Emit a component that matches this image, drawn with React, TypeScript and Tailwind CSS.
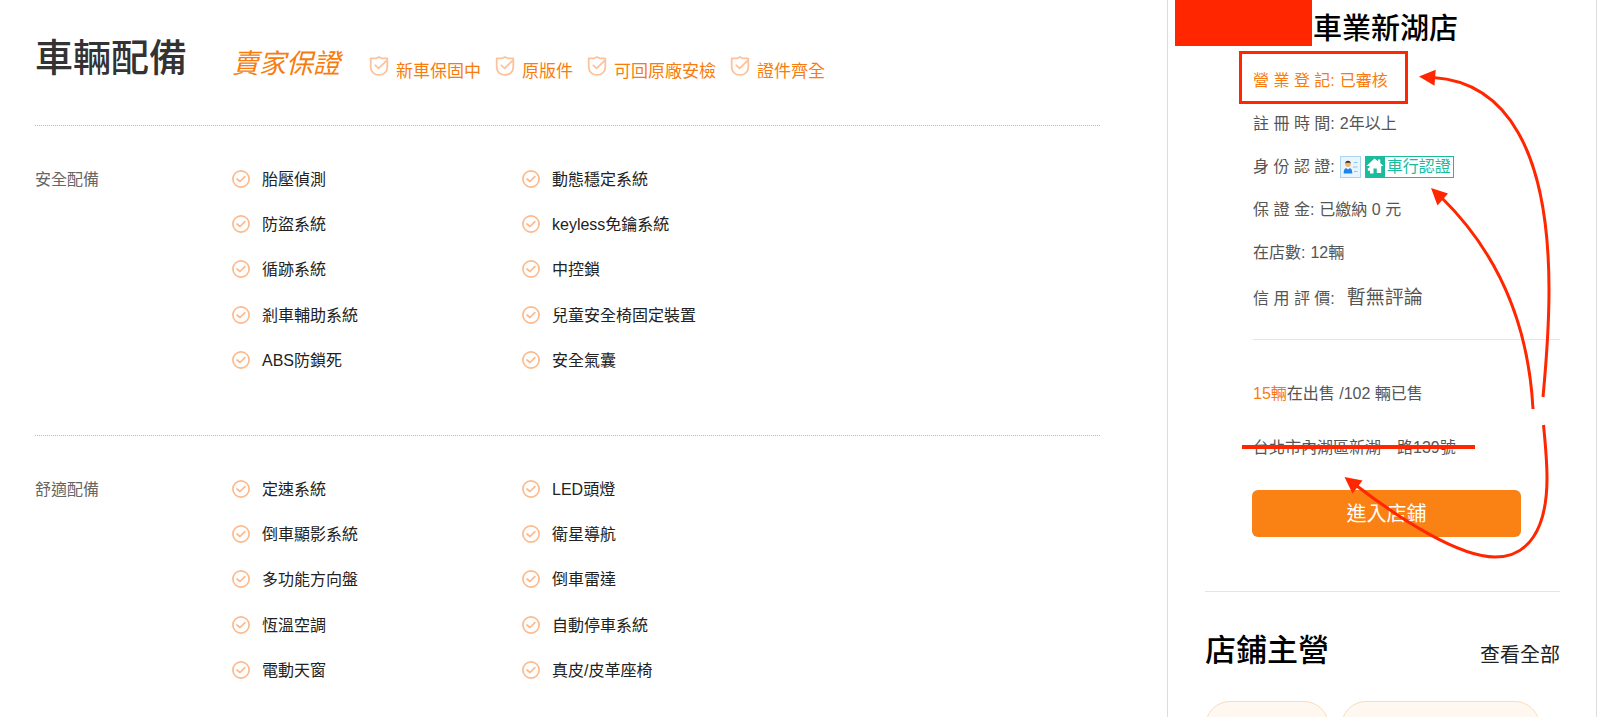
import type { ReactNode } from 'react';

const guarantees = ['新車保固中', '原版件', '可回原廠安檢', '證件齊全'];

const sections = [
  {
    title: '安全配備',
    items: [
      '胎壓偵測', '動態穩定系統',
      '防盜系統', 'keyless免鑰系統',
      '循跡系統', '中控鎖',
      '剎車輔助系統', '兒童安全椅固定裝置',
      'ABS防鎖死', '安全氣囊',
    ],
  },
  {
    title: '舒適配備',
    items: [
      '定速系統', 'LED頭燈',
      '倒車顯影系統', '衛星導航',
      '多功能方向盤', '倒車雷達',
      '恆溫空調', '自動停車系統',
      '電動天窗', '真皮/皮革座椅',
    ],
  },
];

function ShieldIcon() {
  return (
    <svg className="size-5 shrink-0" viewBox="0 0 20 20" fill="none" stroke="#fdc29b" strokeWidth="1.800" strokeLinejoin="round" strokeLinecap="round" aria-hidden="true">
      <path d="M10 1 L12.6 2.3 H18.3 V11 C18.3 16 14.5 18.9 10 18.9 C5.500 18.900 1.700 16 1.700 11 V2.300 H7.400 Z" />
      <path d="M6.300 9.300 L9.600 12.300 L17.300 4.800" />
    </svg>
  );
}

function CheckIcon() {
  return (
    <svg className="mb-[2px] size-[18px] shrink-0" viewBox="0 0 18 18" fill="none" stroke="#fdba8c" strokeWidth="1.700" strokeLinejoin="round" strokeLinecap="round" aria-hidden="true">
      <circle cx="9" cy="9" r="8.100" />
      <path d="M5 9 L8 11.500 L12.900 6.700" />
    </svg>
  );
}

function IdCardIcon() {
  return (
    <svg className="h-[22px] w-[21px]" viewBox="0 0 21 22" aria-hidden="true">
      <rect x="0.500" y="0.500" width="20" height="21" fill="#e9f5fe" stroke="#a9d5ee" />
      <circle cx="8" cy="8.200" r="2.700" fill="#f5b26b" />
      <path d="M5 8 C4.800 3.500 11.200 3.500 11 8 L10.200 6.800 H5.800 Z" fill="#3b2c28" />
      <path d="M3.700 17.500 C3.700 13 5 12.200 6.500 12.200 L8 13.600 L9.500 12.200 C11 12.200 12.300 13 12.300 17.500 Z" fill="#1f86e8" />
      <path d="M14 6.500 H17.500 M13 11 H17.500 M14 15.500 H17.500" stroke="#8fc4ea" strokeWidth="1.200" />
    </svg>
  );
}

function HouseIcon() {
  return (
    <svg className="h-5 w-[19px]" viewBox="0 0 19 20" aria-hidden="true">
      <path d="M8.500 1.500 L12 4.300 V2.500 H14.200 V6 L17.500 9 H15.200 V16 H10.800 V11.500 H7.500 V16.500 H4 V13.800 H1.800 V11 H3.300 V9 H0.500 Z" fill="#fff" />
    </svg>
  );
}

function InfoRow({ label, children }: { label: string; children: ReactNode }) {
  return (
    <div className="flex h-[43px] items-center gap-[5px] last:h-[49px]">
      <dt>{label}</dt>
      <dd className="flex items-center gap-1">{children}</dd>
    </div>
  );
}

function Arrows() {
  return (
    <svg className="pointer-events-none absolute top-0 left-0 h-[717px] w-[428px]" viewBox="1168 0 428 717" fill="none" stroke="#ff2600" strokeWidth="3" aria-hidden="true">
      <path d="M1433 77.500 C1506 82 1549 150 1549 290 C1549 330 1546 365 1543 397" />
      <path d="M1441 197 C1492 247 1528 315 1533 409" />
      <path d="M1543.500 425 C1546 450 1547 465 1547 478 C1547 530 1528 557 1495 557 C1459 557 1400 519 1357 486" />
      <g fill="#ff2600" stroke="none">
        <path d="M1419 76.500 L1435.700 69.700 L1434.500 85.700 Z" />
        <path d="M1431 188 L1448 193.500 L1437.500 205.500 Z" />
        <path d="M1344.500 477 L1362.500 480.500 L1352.500 493.500 Z" />
      </g>
    </svg>
  );
}

export default function App() {
  return (
    <div lang="zh-TW" className="flex h-screen overflow-hidden bg-white pr-[3px] font-['Liberation_Sans','Noto_Sans_CJK_TC',sans-serif] text-base text-[#222]">
      <main className="min-w-0 flex-1 pr-[67px] pl-[35px]">
        <header className="flex h-[125px] items-start pt-8">
          <h1 className="w-[197px] shrink-0 text-[38px] leading-[52px] font-medium text-[#333]">車輛配備</h1>
          <p className="w-[137px] shrink-0 pt-[14px] text-[27px] leading-9 text-[#f87c0d] italic">賣家保證</p>
          <ul className="flex gap-[14px] pt-6 text-[17px] text-[#f87c0d]">
            {guarantees.map((name) => (
              <li key={name} className="flex items-start gap-[7px]">
                <ShieldIcon />
                <span className="pt-1 leading-6">{name}</span>
              </li>
            ))}
          </ul>
        </header>
        {sections.map((section) => (
          <section key={section.title} className="flex h-[310px] border-t border-dotted border-[#bbb] pt-[31px]">
            <h2 className="w-[197px] shrink-0 leading-[46px] text-[#666]">{section.title}</h2>
            <ul className="grid h-[227px] grid-cols-[290px_290px] grid-rows-5">
              {section.items.map((item) => (
                <li key={item} className="flex items-center gap-3">
                  <CheckIcon />
                  {item}
                </li>
              ))}
            </ul>
          </section>
        ))}
      </main>

      <aside className="relative w-[430px] shrink-0 border-x border-[#ddd] pr-9 pl-[37px] text-[#555]">
        <div className="absolute top-0 left-[7px] h-[46px] w-[137px] bg-[#ff2600]" />
        <h2 className="h-[59px] pt-[9px] pl-[108px] text-[29px] leading-10 font-medium text-black">車業新湖店</h2>

        <div className="pl-12">
          <dl className="h-[281px] border-b border-[#e5e5e5]">
            <div className="relative text-[#f87c0d]">
              <InfoRow label="營 業 登 記:">已審核</InfoRow>
              <div className="absolute -top-2 -left-[14px] h-[53px] w-[169px] border-3 border-[#ff2600]" />
            </div>
            <InfoRow label="註 冊 時 間:">2年以上</InfoRow>
            <InfoRow label="身 份 認 證:">
              <IdCardIcon />
              <span className="flex h-[22px] items-center border border-[#1bbc9b] bg-[#1bbc9b] text-[#1bbc9b]">
                <HouseIcon />
                <span className="bg-white px-[2px] leading-5">車行認證</span>
              </span>
            </InfoRow>
            <InfoRow label="保 證 金:">已繳納 0 元</InfoRow>
            <InfoRow label="在店數:">12輛</InfoRow>
            <InfoRow label="信 用 評 價:">
              <span className="pl-[7px] text-[19px]">暫無評論</span>
            </InfoRow>
          </dl>
          <p className="pt-[27px] leading-[54px]">
            <span className="text-[#f87c0d]">15輛</span>在出售 /102 輛已售
          </p>
          <p className="relative leading-[54px]">
            台北市內湖區新湖一路139號
            <span className="absolute top-6 -left-[11px] h-1 w-[233px] bg-[#ff2600]" />
          </p>
        </div>

        <div className="border-b border-[#e5e5e5] pt-[15px] pr-[39px] pb-[54px] pl-[47px]">
          <button type="button" className="h-[47px] w-full rounded-md bg-[#fa8214] text-xl text-white">進入店鋪</button>
        </div>

        <div className="flex items-end justify-between pt-[37px] text-black">
          <h2 className="text-[31px] leading-[44px] font-medium">店鋪主營</h2>
          <a href="#all" className="text-xl leading-9 text-[#222]">查看全部</a>
        </div>
        <div className="flex gap-3 pt-7">
          <span className="h-[50px] w-[124px] rounded-full border border-[#fbdcbd] bg-[#fff8f1]" />
          <span className="h-[50px] w-[199px] rounded-full border border-[#fbdcbd] bg-[#fff8f1]" />
        </div>
        <Arrows />
      </aside>
    </div>
  );
}
